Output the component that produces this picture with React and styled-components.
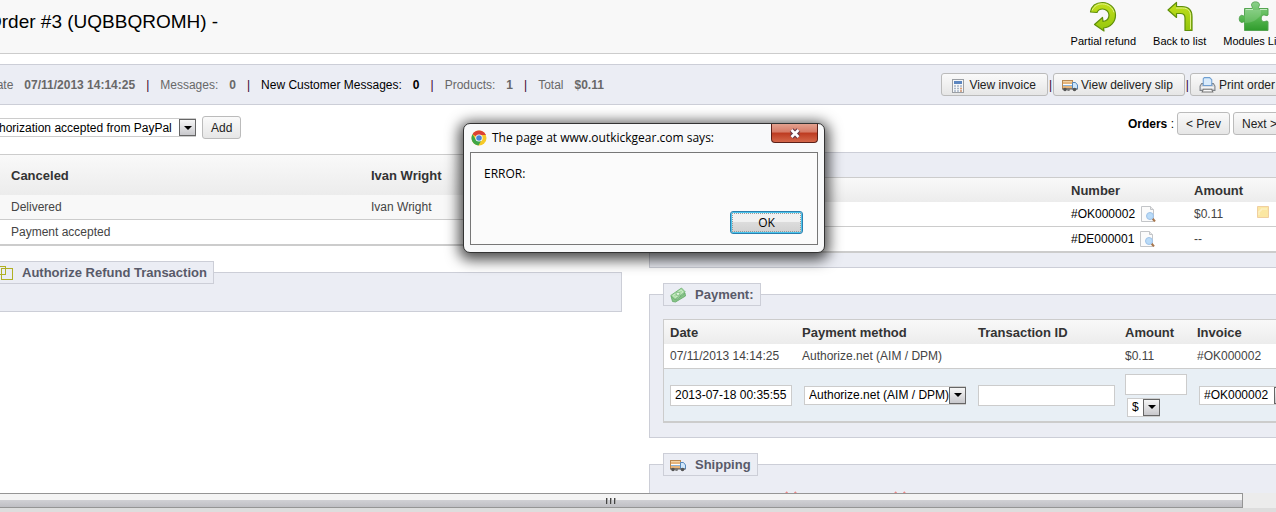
import React from "react";
import styled, { createGlobalStyle } from "styled-components";

const GlobalStyle = createGlobalStyle`
  *, *::before, *::after { box-sizing: border-box; }
  body {
    margin: 0;
    background: #fff;
    color: #000;
    font-family: "Liberation Sans", Arial, sans-serif;
    font-size: 12px;
    line-height: 16px;
  }
  button, input, select { font: inherit; color: inherit; margin: 0; }
`;

const Window = styled.div`
  position: relative;
  display: flex;
  flex-direction: column;
  height: 100vh;
  overflow: hidden;
`;

const Viewport = styled.div`
  flex: 1;
  min-height: 0;
  overflow: hidden;
`;

/* The page is wider than the window and scrolled a little to the right. */
const Page = styled.main`
  margin: 0 -21px 0 -26px;
`;

const PageHeader = styled.header`
  display: flex;
  justify-content: space-between;
  height: 54px;
  padding: 0 12px 0 13px;
  background: #f8f8f8;
  border-bottom: 1px solid #ccc;
`;

const Title = styled.h1`
  margin: 0;
  padding-top: 11px;
  font-size: 19px;
  line-height: 22px;
  font-weight: normal;
`;

const Actions = styled.nav`
  display: flex;
  gap: 17px;
`;

const Action = styled.a`
  display: flex;
  flex-direction: column;
  align-items: center;
  padding-top: 1px;
  color: #000;
  font-size: 11px;
  text-decoration: none;
  white-space: nowrap;
`;

const SummaryBar = styled.section`
  display: flex;
  align-items: center;
  justify-content: space-between;
  height: 41px;
  margin-top: 10px;
  padding: 0 9px 0 13px;
  background: #ebedf4;
  border: 1px solid #ccced7;
  white-space: nowrap;
`;

const Stats = styled.div`
  display: flex;
  gap: 11px;
`;

const Stat = styled.span`
  display: flex;
  gap: 11px;
  color: ${(p) => (p.$strong ? "#000" : "#686868")};
`;

const Pipe = styled.span`
  color: #3a0030;
`;

const Buttons = styled.div`
  display: flex;
  align-items: center;
  gap: 1px;
`;

const Button = styled.button`
  display: inline-flex;
  align-items: center;
  justify-content: center;
  gap: 3px;
  height: 23px;
  padding: 0 ${(p) => (p.$withIcon ? 11 : 8)}px 0 8px;
  background: linear-gradient(#fafafa, #e6e6e6);
  border: 1px solid #bbb;
  border-radius: 3px;
  color: #222;
  white-space: nowrap;
`;

const Columns = styled.div`
  display: grid;
  grid-template-columns: minmax(0, 1fr) minmax(0, 1fr);
  gap: 27px;
`;

const StateForm = styled.form`
  display: flex;
  align-items: center;
  gap: 6px;
  padding: 11px 0 15px;
`;

const Pager = styled.div`
  display: flex;
  align-items: center;
  justify-content: flex-end;
  gap: 3px;
  padding: 7px 11px 17px;
`;

const SelectBox = styled.span`
  position: relative;
  display: inline-flex;
  width: ${(p) => p.$width}px;
  margin-left: 2px;
`;

const SelectField = styled.select`
  appearance: none;
  width: 100%;
  height: 19px;
  padding: 0 14px 0 4px;
  background: #fff;
  border: 1px solid #ccc;
  border-radius: 0;
`;

const SelectArrow = styled.span`
  position: absolute;
  top: 1px;
  right: 0;
  display: grid;
  place-items: center;
  width: 17px;
  height: 17px;
  background: linear-gradient(#f6f6f6, #c8c8cc);
  border: 1px solid #666;
  pointer-events: none;

  &::after {
    content: "";
    border: 4px solid transparent;
    border-top-color: #000;
    border-bottom-width: 0;
  }
`;

const TextInput = styled.input`
  display: block;
  width: ${(p) => p.$width}px;
  height: 21px;
  padding: 0 4px;
  background: #fff;
  border: 1px solid #ccc;
`;

const Table = styled.table`
  width: 100%;
  table-layout: fixed;
  border: 1px solid #ccc;
  border-bottom-width: 2px;
  border-spacing: 0;
  background: #fff;
  color: #444;
  white-space: nowrap;
`;

const HeadRow = styled.tr`
  height: ${(p) => (p.$tall ? 40 : 24)}px;
  background: linear-gradient(#f9f9f9, #ececec);
`;

const Row = styled.tr`
  height: ${(p) => p.$height || 25}px;
  background: ${(p) => p.$background || "transparent"};
`;

const EntryRow = styled(Row)`
  color: #000;
`;

const Th = styled.th`
  padding: 2px 6px 0;
  color: #333;
  font-size: 13px;
  text-align: left;
`;

const Td = styled.td`
  padding: 0 6px;
  border-bottom: ${(p) => (p.$last ? "0" : "1px solid #ccc")};
`;

const CellLink = styled.a`
  display: flex;
  align-items: center;
  gap: 5px;
  color: #000;
  text-decoration: none;
`;

const Stack = styled.div`
  display: flex;
  flex-direction: column;
  align-items: flex-start;
  gap: 3px;
`;

const Panel = styled.fieldset`
  min-width: 0;
  margin: 0 0 15px;
  padding: ${(p) => (p.$untitled ? 24 : 13)}px 13px 14px;
  background: #ebedf4;
  border: 1px solid #ccced7;
`;

const Legend = styled.legend`
  display: flex;
  align-items: center;
  gap: 9px;
  height: 23px;
  padding: 0 6px;
  background: #ebedf4;
  border: 1px solid #ccced7;
  color: #585a69;
  font-size: 13px;
  font-weight: bold;
`;

const LeftPanel = styled(Panel)`
  margin-top: 15px;
`;

const Marks = styled.div`
  display: flex;
  gap: 93px;
  padding: 1px 0 0 120px;
`;

const ScrollBar = styled.div`
  height: 19px;
  padding-right: 33px;
  background: #ececec;
  border-bottom: 4px solid #ddd;
`;

const ScrollThumb = styled.div`
  display: flex;
  justify-content: center;
  gap: 2px;
  height: 15px;
  padding: 4px 20px 0 0;
  background: linear-gradient(#f4f4f4 0 45%, #cfcfd3 50%, #bfbfc4);
  border: 1px solid #959595;
  border-left: 0;
`;

const Grip = styled.i`
  width: 2px;
  height: 6px;
  border-left: 1px solid #444;
  background: #aaa;
`;

const Dialog = styled.section`
  position: absolute;
  top: 123px;
  left: calc(50% - 175px);
  width: 362px;
  padding: 0 6px 7px;
  background: #f8f9fa;
  border: 1px solid #333;
  border-radius: 7px;
  box-shadow: 0 3px 14px 4px rgba(0, 0, 0, 0.7);
  font-family: "Open Sans", "Noto Sans", sans-serif;
`;

const DialogBar = styled.header`
  display: flex;
  align-items: center;
  gap: 5px;
  height: 28px;
  padding-left: 1px;
`;

const DialogTitle = styled.h2`
  flex: 1;
  margin: 0;
  font-size: 12px;
  font-weight: normal;
  white-space: nowrap;
`;

const CloseButton = styled.button`
  display: grid;
  place-items: center;
  align-self: flex-start;
  width: 47px;
  height: 19px;
  padding: 0;
  background: linear-gradient(#e3a18f, #d67a66 45%, #bd3a20 50%, #d4674a);
  border: 1px solid #5c2018;
  border-top: 0;
  border-radius: 0 0 4px 4px;
`;

const DialogBody = styled.div`
  display: flex;
  flex-direction: column;
  justify-content: space-between;
  height: 93px;
  padding: 13px 14px 10px 13px;
  background: #fbfbfb;
  border: 1px solid #777;
`;

const OkButton = styled.button`
  align-self: flex-end;
  width: 73px;
  height: 23px;
  padding: 0;
  background: linear-gradient(#f1f1f1 45%, #dcdcdc 50%, #d0d0d0);
  border: 1px solid #2c7fae;
  border-radius: 3px;
  box-shadow: inset 0 0 0 1px #4cc6ee;
  outline: 1px dotted #999;
  outline-offset: -3px;
`;

function Select({ label, options, width }) {
  return (
    <SelectBox $width={width}>
      <SelectField aria-label={label}>
        {options.map((o) => (
          <option key={o}>{o}</option>
        ))}
      </SelectField>
      <SelectArrow />
    </SelectBox>
  );
}

const RefundIcon = () => (
  <svg width="32" height="32" viewBox="0 0 32 32" aria-hidden="true">
    <defs>
      <linearGradient id="lime" x1="0" y1="0" x2="0" y2="1">
        <stop offset="0" stopColor="#c3e01c" />
        <stop offset="1" stopColor="#93c60c" />
      </linearGradient>
    </defs>
    <path
      d="M3.500 11C4.500 5 9 1.500 15.500 1.500 22.500 1.500 28.500 7 28.500 14c0 7-5 12.500-12 13l.5 3L7.500 23.500 15.500 16.500l.5 4c4-.5 6-3 6-6.500 0-3.500-3-6-6.500-6-2.500 0-4.500 1-5.500 3.500z"
      fill="url(#lime)" stroke="#5f8f08" strokeWidth="1.200" strokeLinejoin="round"
    />
    <path d="M5 9.500C7 5 11 2.900 15.500 2.900c5.500.2 10 3.500 11.500 8.500" fill="none" stroke="#e2f28a" />
  </svg>
);

const BackIcon = () => (
  <svg width="32" height="32" viewBox="0 0 32 32" aria-hidden="true">
    <path
      d="M4 9l8.500-7.500v4.200H18c6.500 0 10 3.500 10 10V29.500h-7V17c0-3-1.500-4.500-4.500-4.500h-4V16.500z"
      fill="url(#lime)" stroke="#5f8f08" strokeWidth="1.200" strokeLinejoin="round"
    />
    <path d="M12 7h6.500c5.500 0 8 3 8 8v13" fill="none" stroke="#e2f28a" />
  </svg>
);

const ModulesIcon = () => (
  <svg width="32" height="32" viewBox="0 0 32 32" aria-hidden="true">
    <defs>
      <linearGradient id="puzzle" x1="0" y1="0" x2="0" y2="1">
        <stop offset="0" stopColor="#8bd08b" />
        <stop offset=".5" stopColor="#5dbb57" />
        <stop offset="1" stopColor="#2f9b2c" />
      </linearGradient>
    </defs>
    <path
      d="M6.500 7.500H14c1-1.500-.8-2.500-.5-4 .5-3.500 7.500-3.500 8 0 .2 1.500-1.600 2.500-.7 4H30V14c-1.500 1.500-2.500-.3-4.500 0-3 .6-3 6 0 6.600 2 .4 3-1.500 4.500 0V29.500H6.500V21.500c-1-1.500-2 .3-3 0-3-.8-3-6.500 0-7.200 1-.2 2 1.400 3 .2z"
      fill="url(#puzzle)" stroke="#55a552"
    />
    <path d="M7.500 8.500h7.500M22 8.500h7" stroke="#c4eac2" />
    <path d="M7 22c7 0 12-3 16-8V9H7z" fill="#fff" opacity=".15" />
  </svg>
);

const InvoiceIcon = () => (
  <svg width="16" height="16" viewBox="0 0 16 16" aria-hidden="true">
    <rect x="2.500" y="2.500" width="11" height="13" fill="#f6f7f8" stroke="#9b9fa4" />
    <rect x="4" y="4" width="8" height="3" fill="#5c86c0" />
    <path d="M4 9h8M4 11.500h8M4 14h8" stroke="#a9b7c8" strokeWidth="1.500" strokeDasharray="2 1" />
    <path d="M10 11.500h2M10 14h2" stroke="#dda078" strokeWidth="1.500" />
  </svg>
);

const TruckIcon = () => (
  <svg width="16" height="16" viewBox="0 0 16 16" aria-hidden="true">
    <rect x=".5" y="3.500" width="10" height="8" fill="#e6b57c" stroke="#b98850" />
    <path d="M1 4.500h9" stroke="#f3d3a4" />
    <path d="M1 7.500h9" stroke="#fff" />
    <path d="M1 8.500h9" stroke="#8db4d8" />
    <path d="M10.500 5.500h3l2 2.500v4h-5z" fill="#cfe6fa" stroke="#5588bd" />
    <path d="M0 12h15.500" stroke="#666" />
    <circle cx="3" cy="12.500" r="1.800" fill="#555" />
    <circle cx="6.500" cy="12.500" r="1.500" fill="#777" />
    <circle cx="12.500" cy="12.500" r="1.800" fill="#555" />
  </svg>
);

const PrinterIcon = () => (
  <svg width="17" height="17" viewBox="0 0 16 16" aria-hidden="true">
    <path d="M2.500 7L1 9.500v4h14v-4L13.500 7h-1.500V9H4V7z" fill="#dcdee1" stroke="#7d8288" />
    <path d="M4 9V2.500l1-1h5L12 3.500V9z" fill="#d9ebfb" stroke="#6f9fd2" />
    <path d="M2 11h12" stroke="#f8f8f8" />
    <path d="M4 12.500h8l1 2.500H3z" fill="#f8f8f9" stroke="#777" />
  </svg>
);

const MoneyIcon = () => (
  <svg width="16" height="16" viewBox="0 0 16 16" aria-hidden="true">
    <path d="M1 9l1.500 5.500 3 .5 10-6-.5-3L6 13z" fill="#86c486" stroke="#5fa766" strokeWidth=".8" />
    <path d="M.7 8.500L11.500 1 15.300 5 5 12.500z" fill="#a9dba5" stroke="#66ad6a" strokeWidth=".8" />
    <path d="M3 8.500L11 3l2 2-8 5.500z" fill="none" stroke="#d8f0d4" strokeWidth=".7" />
    <ellipse cx="8" cy="6.800" rx="2" ry="1.600" fill="#e2f4df" stroke="#66ad6a" strokeWidth=".7" />
  </svg>
);

const SquaresIcon = () => (
  <svg width="18" height="16" viewBox="0 0 18 16" aria-hidden="true" fill="none" stroke="#b0b024">
    <rect x=".5" y="1.500" width="10" height="8" />
    <rect x="6.500" y="3.500" width="11" height="11" />
  </svg>
);

const DocIcon = () => (
  <svg width="16" height="16" viewBox="0 0 16 16" aria-hidden="true">
    <path d="M1.500.5h9l3 3v12h-12z" fill="#fbfbfb" stroke="#c3c5c8" />
    <path d="M10.500.5v3h3" fill="#e8e8e8" stroke="#c3c5c8" />
    <path d="M12.500 12.500l2.500 3" stroke="#a8764c" strokeWidth="2" />
    <circle cx="10" cy="10" r="3.500" fill="#b9dbf8" stroke="#9fc2e8" />
  </svg>
);

const NoteIcon = () => (
  <svg width="12" height="12" viewBox="0 0 12 12" aria-hidden="true">
    <path d="M.5.500h11v11H.5z" fill="#fbe7a2" stroke="#f0cfa0" />
    <path d="M2 9V5h2V3h6" fill="none" stroke="#fdf3cd" />
  </svg>
);

const RedMark = () => (
  <svg width="16" height="16" viewBox="0 0 16 16" aria-hidden="true">
    <path d="M3 2l10 12M13 2L3 14" stroke="#e88" strokeWidth="2" />
  </svg>
);

const ChromeIcon = () => (
  <svg width="16" height="16" viewBox="0 0 16 16" aria-hidden="true">
    <circle cx="8" cy="8" r="7.500" fill="#f5c928" />
    <path d="M8 8L1.500 4.250A7.500 7.500 0 0 1 14.500 4.250L15 5H8z" fill="#dc4234" />
    <path d="M8 8L4.800 9.500 1.500 4.250A7.500 7.500 0 0 0 7.500 15.500L10.500 10z" fill="#3fa648" />
    <circle cx="8" cy="8" r="3.600" fill="#fff" />
    <circle cx="8" cy="8" r="2.800" fill="#4a85d8" />
  </svg>
);

const CloseIcon = () => (
  <svg width="12" height="11" viewBox="0 0 12 11" aria-hidden="true">
    <path d="M2.500 2l7 7M9.500 2l-7 7" stroke="#6b3a48" strokeWidth="5" />
    <path d="M2.500 2l7 7M9.500 2l-7 7" stroke="#fff" strokeWidth="2.600" />
  </svg>
);

const stats = [
  { label: "Date", value: "07/11/2013 14:14:25" },
  { label: "Messages:", value: "0" },
  { label: "New Customer Messages:", value: "0", strong: true },
  { label: "Products:", value: "1" },
  { label: "Total", value: "$0.11" },
];

const documents = [
  { number: "#OK000002", amount: "$0.11", note: true },
  { number: "#DE000001", amount: "--" },
];

export default function App() {
  return (
    <Window>
      <GlobalStyle />
      <Viewport>
        <Page>
          <PageHeader>
            <Title>Order #3 (UQBBQROMH) -</Title>
            <Actions>
              <Action href="#refund"><RefundIcon />Partial refund</Action>
              <Action href="#list"><BackIcon />Back to list</Action>
              <Action href="#modules"><ModulesIcon />Modules List</Action>
            </Actions>
          </PageHeader>

          <SummaryBar>
            <Stats>
              {stats.map((s, i) => (
                <React.Fragment key={s.label}>
                  {i > 0 && <Pipe>|</Pipe>}
                  <Stat $strong={s.strong}>{s.label} <b>{s.value}</b></Stat>
                </React.Fragment>
              ))}
            </Stats>
            <Buttons>
              <Button type="button" $withIcon><InvoiceIcon />View invoice</Button>
              <Pipe>|</Pipe>
              <Button type="button" $withIcon><TruckIcon />View delivery slip</Button>
              <Pipe>|</Pipe>
              <Button type="button" $withIcon><PrinterIcon />Print order</Button>
            </Buttons>
          </SummaryBar>

          <Columns>
            <div>
              <StateForm>
                <Select label="Order state" options={["Authorization accepted from PayPal"]} width={220} />
                <Button type="button">Add</Button>
              </StateForm>
              <Table>
                <colgroup>
                  <col style={{ width: 30 }} />
                  <col style={{ width: 360 }} />
                  <col />
                </colgroup>
                <thead>
                  <HeadRow $tall>
                    <Th />
                    <Th>Canceled</Th>
                    <Th>Ivan Wright</Th>
                  </HeadRow>
                </thead>
                <tbody>
                  <Row $background="#f8f8f8">
                    <Td />
                    <Td>Delivered</Td>
                    <Td>Ivan Wright</Td>
                  </Row>
                  <Row $height={24}>
                    <Td $last />
                    <Td $last>Payment accepted</Td>
                    <Td $last />
                  </Row>
                </tbody>
              </Table>
              <LeftPanel>
                <Legend><SquaresIcon />Authorize Refund Transaction</Legend>
              </LeftPanel>
            </div>

            <div>
              <Pager>
                <span><b>Orders</b> :</span>
                <Button type="button">&lt; Prev</Button>
                <Button type="button">Next &gt;</Button>
              </Pager>

              <Panel $untitled>
                <Table>
                  <colgroup>
                    <col />
                    <col style={{ width: 123 }} />
                    <col style={{ width: 63 }} />
                    <col style={{ width: 31 }} />
                  </colgroup>
                  <thead>
                    <HeadRow>
                      <Th />
                      <Th>Number</Th>
                      <Th>Amount</Th>
                      <Th />
                    </HeadRow>
                  </thead>
                  <tbody>
                    {documents.map((d, i) => {
                      const last = i === documents.length - 1;
                      return (
                        <Row key={d.number} $height={last ? 24 : 25}>
                          <Td $last={last} />
                          <Td $last={last}>
                            <CellLink href="#document">{d.number}<DocIcon /></CellLink>
                          </Td>
                          <Td $last={last}>{d.amount}</Td>
                          <Td $last={last}>{d.note && <NoteIcon />}</Td>
                        </Row>
                      );
                    })}
                  </tbody>
                </Table>
              </Panel>

              <Panel>
                <Legend><MoneyIcon />Payment:</Legend>
                <Table>
                  <colgroup>
                    <col style={{ width: 132 }} />
                    <col style={{ width: 176 }} />
                    <col style={{ width: 147 }} />
                    <col style={{ width: 72 }} />
                    <col />
                  </colgroup>
                  <thead>
                    <HeadRow>
                      <Th>Date</Th>
                      <Th>Payment method</Th>
                      <Th>Transaction ID</Th>
                      <Th>Amount</Th>
                      <Th>Invoice</Th>
                    </HeadRow>
                  </thead>
                  <tbody>
                    <Row>
                      <Td>07/11/2013 14:14:25</Td>
                      <Td>Authorize.net (AIM / DPM)</Td>
                      <Td />
                      <Td>$0.11</Td>
                      <Td>#OK000002</Td>
                    </Row>
                    <EntryRow $height={52} $background="#e8eff5">
                      <Td $last><TextInput aria-label="Date" $width={122} defaultValue="2013-07-18 00:35:55" /></Td>
                      <Td $last>
                        <Select label="Payment method" options={["Authorize.net (AIM / DPM)"]} width={162} />
                      </Td>
                      <Td $last><TextInput aria-label="Transaction ID" $width={137} /></Td>
                      <Td $last>
                        <Stack>
                          <TextInput aria-label="Amount" $width={62} />
                          <Select label="Currency" options={["$"]} width={33} />
                        </Stack>
                      </Td>
                      <Td $last><Select label="Invoice" options={["#OK000002"]} width={92} /></Td>
                    </EntryRow>
                  </tbody>
                </Table>
              </Panel>

              <Panel>
                <Legend><TruckIcon />Shipping</Legend>
                <Marks><RedMark /><RedMark /></Marks>
              </Panel>
            </div>
          </Columns>
        </Page>
      </Viewport>

      <ScrollBar>
        <ScrollThumb><Grip /><Grip /><Grip /></ScrollThumb>
      </ScrollBar>

      <Dialog role="dialog" aria-labelledby="dialog-title">
        <DialogBar>
          <ChromeIcon />
          <DialogTitle id="dialog-title">The page at www.outkickgear.com says:</DialogTitle>
          <CloseButton type="button" aria-label="Close"><CloseIcon /></CloseButton>
        </DialogBar>
        <DialogBody>
          <span>ERROR:</span>
          <OkButton type="button">OK</OkButton>
        </DialogBody>
      </Dialog>
    </Window>
  );
}
